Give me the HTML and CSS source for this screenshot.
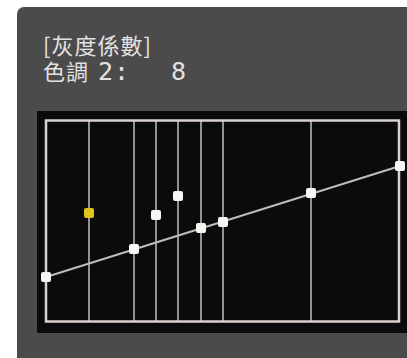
FILE: index.html
```html
<!doctype html>
<html lang="zh-Hant">
<head>
  <meta charset="utf-8">
  <title>灰度係數</title>
  <link rel="stylesheet" href="styles.css">
</head>
<body>
  <div class="panel">
    <div class="title">
      <div class="line">[灰度係數]</div>
      <div class="line">色調 <span class="num">2:</span><span class="val">8</span></div>
    </div>

    <!-- gamma curve -->
    <div class="chart">
      <svg width="370" height="222" viewBox="0 0 370 222">
        <g class="grid">
          <line x1="52" y1="10" x2="52" y2="210"/>
          <line x1="97" y1="10" x2="97" y2="210"/>
          <line x1="119" y1="10" x2="119" y2="210"/>
          <line x1="141" y1="10" x2="141" y2="210"/>
          <line x1="164" y1="10" x2="164" y2="210"/>
          <line x1="186" y1="10" x2="186" y2="210"/>
          <line x1="274" y1="10" x2="274" y2="210"/>
        </g>
        <rect class="frame" x="9" y="9.5" width="353" height="201"/>
        <line class="curve" x1="9" y1="166" x2="363" y2="55"/>
        <g class="dots">
          <rect x="4" y="161" width="10" height="10" rx="2"/>
          <rect x="92" y="133" width="10" height="10" rx="2"/>
          <rect x="114" y="99" width="10" height="10" rx="2"/>
          <rect x="136" y="80" width="10" height="10" rx="2"/>
          <rect x="159" y="112" width="10" height="10" rx="2"/>
          <rect x="181" y="106" width="10" height="10" rx="2"/>
          <rect x="269" y="77" width="10" height="10" rx="2"/>
          <rect x="358" y="50" width="10" height="10" rx="2"/>
        </g>
        <rect class="active" x="47" y="97" width="10" height="10" rx="2"/>
      </svg>
    </div>
  </div>
</body>
</html>
```

FILE: styles.css
```css
body {
  background-color: white;
  margin: 0;
  padding: 0;
  font: 22px "Noto Sans CJK TC", "Noto Sans CJK SC", sans-serif;
}
.panel {
  margin: 7px 0 0 17px;
  height: 351px;
  background-color: #4b4b4b;
  border-top-left-radius: 7px;
  overflow: hidden;
}
.title {
  padding-top: 24px;
  padding-left: 26px;
  color: #e2e2e2;
  height: 104px;
  box-sizing: border-box;
  letter-spacing: 1px;
}
.line {
  height: 26px;
  line-height: 26px;
  white-space: nowrap;
}
.num {
  font: 25px "DejaVu Sans Mono", monospace;
  margin-left: 3px;
}
.val {
  font: 25px "DejaVu Sans Mono", monospace;
  margin-left: 41px;
}
.chart {
  margin-left: 20px;
  height: 222px;
  background-color: #0c0b0b;
}
.chart svg {
  display: block;
}
.grid line {
  stroke: #8c9494;
  stroke-width: 2;
}
.frame {
  fill: none;
  stroke: #d9d2ce;
  stroke-width: 2.5;
}
.curve {
  stroke: #bdbdbd;
  stroke-width: 2;
}
.dots rect {
  fill: #f6f6f2;
}
.active {
  fill: #e2c21c;
}
```
